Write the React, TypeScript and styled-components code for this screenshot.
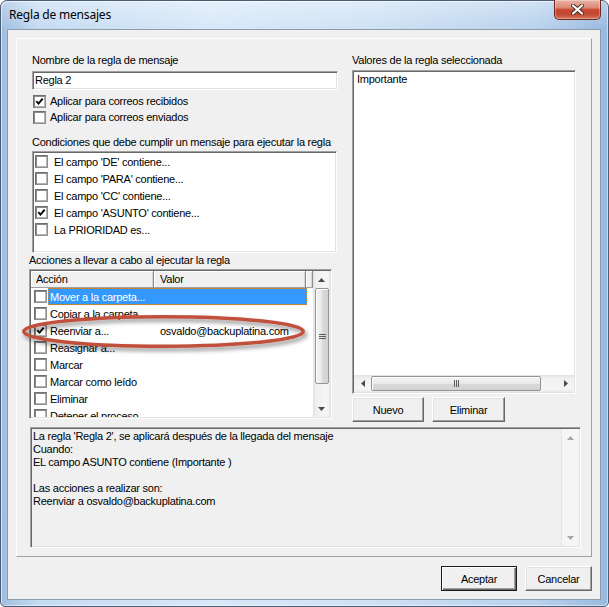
import styled, { createGlobalStyle, css } from 'styled-components';

const GlobalStyle = createGlobalStyle`
  html, body {
    margin: 0;
    padding: 0;
    background: #ffffff;
  }
  body {
    font-family: "Liberation Sans", Arial, sans-serif;
    font-size: 11px;
    letter-spacing: -0.25px;
    color: #000;
  }
`;

const sunken = css`
  box-sizing: border-box;
  border: 1px solid;
  border-color: #a0a0a0 #ffffff #ffffff #a0a0a0;
  box-shadow: inset 1px 1px 0 #696969, inset -1px -1px 0 #e3e3e3;
`;

const Window = styled.div`
  box-sizing: border-box;
  width: 609px;
  height: 607px;
  border: 1px solid #4a5d74;
  border-radius: 7px 7px 5px 5px;
  padding: 0 7px 6px 6px;
  display: flex;
  flex-direction: column;
  background:
    linear-gradient(180deg, rgba(255, 255, 255, 0.35) 0, rgba(255, 255, 255, 0) 28px),
    linear-gradient(90deg, #9fbde0 0, #c4dbf2 6%, #d8e8f8 35%, #cfe2f5 60%, #b9d2ed 88%, #98b9df 100%);
  box-shadow: inset 1px 1px 0 rgba(255, 255, 255, 0.6), inset -1px -1px 0 rgba(255, 255, 255, 0.5);
`;

const TitleBar = styled.div`
  height: 28px;
  flex-shrink: 0;
  display: flex;
  align-items: flex-start;
`;

const Title = styled.span`
  font-family: "Noto Sans", "Open Sans", sans-serif;
  font-size: 12px;
  letter-spacing: -0.2px;
  line-height: 28px;
  margin-left: 2px;
`;

const CloseButton = styled.div`
  box-sizing: border-box;
  margin-left: auto;
  margin-top: -1px;
  width: 47px;
  height: 20px;
  border: 1px solid #6e2a20;
  border-top: none;
  border-radius: 0 0 5px 5px;
  background: linear-gradient(180deg, #eab3a6 0, #dc8a77 40%, #c6452f 52%, #c24a33 75%, #d7765c 100%);
  box-shadow: inset 0 0 0 1px rgba(255, 255, 255, 0.3);
  display: flex;
  align-items: center;
  justify-content: center;
`;

const Client = styled.div`
  flex: 1;
  border: 1px solid #8d9bab;
  background: #f0f0f0;
  padding: 8px;
  display: flex;
  flex-direction: column;
`;

const Panel = styled.div`
  box-sizing: border-box;
  height: 519px;
  border: 1px solid;
  border-color: #ffffff #a0a0a0 #a0a0a0 #ffffff;
  padding: 15px 11px 0 12px;
  display: flex;
  flex-direction: column;
`;

const TopArea = styled.div`
  display: grid;
  grid-template-columns: 309px 224px;
  column-gap: 14px;
  align-items: start;
`;

const Column = styled.div`
  display: flex;
  flex-direction: column;
`;

const Label = styled.div<{ $indent?: number; $top?: number }>`
  height: 13px;
  line-height: 13px;
  white-space: nowrap;
  margin-left: ${p => p.$indent ?? 0}px;
  margin-top: ${p => p.$top ?? 0}px;
`;

const TextBox = styled.div`
  ${sunken};
  width: 306px;
  height: 19px;
  margin: 4px 0 0 3px;
  background: #ffffff;
  padding: 0 2px;
  line-height: 16px;
`;

const CheckRow = styled.div<{ $top?: number }>`
  display: flex;
  align-items: center;
  gap: 4px;
  height: 16px;
  margin: ${p => p.$top ?? 0}px 0 0 4px;
  white-space: nowrap;
`;

const Box = styled.span`
  box-sizing: border-box;
  width: 13px;
  height: 13px;
  flex-shrink: 0;
  border: 1px solid;
  border-color: #6f6f6f #8f8f8f #8f8f8f #6f6f6f;
  box-shadow: inset 1px 1px 0 #8a8a8a, inset -1px -1px 0 #b4b4b4;
  background: #ffffff;
  display: flex;
  align-items: center;
  justify-content: center;
`;

const CondBox = styled.div`
  ${sunken};
  width: 305px;
  height: 102px;
  margin: 2px 0 0 3px;
  padding: 1px 0 0 2px;
  background: #ffffff;
`;

const CondRow = styled.div`
  display: flex;
  align-items: center;
  gap: 6px;
  height: 17px;
  white-space: nowrap;
`;

const ListWrap = styled.div`
  position: relative;
  margin-top: 2px;
  width: 303px;
  height: 150px;
`;

const ListView = styled.div`
  ${sunken};
  width: 100%;
  height: 100%;
  padding: 1px;
  background: #ffffff;
  display: flex;
`;

const ListMain = styled.div`
  width: 282px;
  display: flex;
  flex-direction: column;
  overflow: hidden;
`;

const HeaderRow = styled.div`
  display: flex;
  height: 17px;
  flex-shrink: 0;
`;

const HeaderCell = styled.div<{ $w: number; $pad: number }>`
  box-sizing: border-box;
  width: ${p => p.$w}px;
  padding-left: ${p => p.$pad}px;
  background: #f0f0f0;
  border-right: 1px solid #8a8a8a;
  border-bottom: 1px solid #a0a0a0;
  box-shadow: inset 1px 1px 0 #ffffff, inset -1px 0 0 #d6d6d6;
  line-height: 16px;
  white-space: nowrap;
`;

const ActionRow = styled.div`
  display: flex;
  align-items: center;
  gap: 1px;
  height: 17px;
  padding-left: 3px;
  flex-shrink: 0;
  white-space: nowrap;
`;

const RowContent = styled.div<{ $selected?: boolean }>`
  box-sizing: border-box;
  display: flex;
  align-items: center;
  width: 259px;
  height: 17px;
  ${p =>
    p.$selected &&
    css`
      background: #3399ff;
      color: #ffffff;
      outline: 1px dotted #d08a3c;
      outline-offset: -1px;
    `}
`;

const Cell = styled.span<{ $w?: number; $pad: number }>`
  ${p => (p.$w ? `width: ${p.$w}px;` : '')}
  box-sizing: border-box;
  padding-left: ${p => p.$pad}px;
`;

const VScroll = styled.div`
  width: 17px;
  display: flex;
  flex-direction: column;
  background: linear-gradient(90deg, #e3e3e3 0, #f0f0f0 20%, #f6f6f6 80%, #e9e9e9 100%);
`;

const ArrowCell = styled.div<{ $end?: boolean }>`
  width: 17px;
  height: 17px;
  flex-shrink: 0;
  display: flex;
  align-items: center;
  justify-content: center;
  ${p => p.$end && 'margin-top: auto; margin-left: auto;'}
`;

const VThumb = styled.div`
  box-sizing: border-box;
  height: 96px;
  margin: 0 1px 0 2px;
  border: 1px solid #959595;
  border-radius: 2px;
  background: linear-gradient(90deg, #f4f4f4 0, #e8e8e8 50%, #dadada 51%, #d2d2d2 100%);
  box-shadow: inset 1px 1px 0 #ffffff;
  display: flex;
  align-items: center;
  justify-content: center;
`;

const Annotation = styled.svg`
  position: absolute;
  left: -12px;
  top: 40px;
  overflow: visible;
  pointer-events: none;
`;

const ValuesBox = styled.div`
  ${sunken};
  margin-top: 3px;
  width: 224px;
  height: 324px;
  padding: 1px;
  background: #ffffff;
  display: flex;
  flex-direction: column;
`;

const ValueText = styled.div`
  line-height: 13px;
  padding: 1px 3px;
`;

const HScroll = styled.div`
  margin-top: auto;
  height: 17px;
  display: flex;
  background: linear-gradient(180deg, #e3e3e3 0, #f0f0f0 20%, #f6f6f6 80%, #e9e9e9 100%);
`;

const HThumb = styled.div`
  box-sizing: border-box;
  width: 170px;
  margin: 1px 0 1px 0;
  border: 1px solid #959595;
  border-radius: 2px;
  background: linear-gradient(180deg, #f4f4f4 0, #e8e8e8 50%, #dadada 51%, #d2d2d2 100%);
  box-shadow: inset 1px 1px 0 #ffffff;
  display: flex;
  align-items: center;
  justify-content: center;
`;

const ButtonRow = styled.div<{ $top: number; $end?: boolean }>`
  display: flex;
  gap: 8px;
  margin-top: ${p => p.$top}px;
  ${p => p.$end && 'justify-content: flex-end;'}
`;

const Button = styled.button<{ $w: number; $default?: boolean }>`
  box-sizing: border-box;
  width: ${p => p.$w}px;
  height: 25px;
  padding: 0;
  font: inherit;
  letter-spacing: inherit;
  color: #000;
  background: #f0f0f0;
  border: 1px solid;
  border-color: #ffffff #696969 #696969 #ffffff;
  box-shadow: inset -1px -1px 0 #a0a0a0, inset 1px 1px 0 #e3e3e3;
  ${p =>
    p.$default &&
    css`
      border-color: #1a1a1a;
      box-shadow: inset 1px 1px 0 #ffffff, inset -1px -1px 0 #696969, inset -2px -2px 0 #a0a0a0;
    `}
`;

const DescBox = styled.div`
  ${sunken};
  margin: 5px 0 0 1px;
  width: 551px;
  height: 121px;
  padding: 1px;
  background: #f0f0f0;
  display: flex;
`;

const DescText = styled.div`
  flex: 1;
  padding: 1px;
  line-height: 13px;
  white-space: pre-line;
`;

const DescScroll = styled.div`
  width: 17px;
  display: flex;
  flex-direction: column;
  background: #f5f5f5;
  border-left: 1px solid #e6e6e6;
`;

type Dir = 'up' | 'down' | 'left' | 'right';

function Arrow({ dir, color = '#4a4a4a' }: { dir: Dir; color?: string }) {
  const pts: Record<Dir, string> = {
    up: '0,4 3.5,0 7,4',
    down: '0,0 3.5,4 7,0',
    left: '4,0 0,3.5 4,7',
    right: '0,0 4,3.5 0,7',
  };
  const vertical = dir === 'up' || dir === 'down';
  return (
    <svg width={vertical ? 7 : 4} height={vertical ? 4 : 7}>
      <polygon points={pts[dir]} fill={color} />
    </svg>
  );
}

function Check({ checked }: { checked?: boolean }) {
  return (
    <Box>
      {checked && (
        <svg width="9" height="9" viewBox="0 0 9 9">
          <path d="M1.3 4.2 L3.5 6.6 L7.7 1.6" fill="none" stroke="#000" strokeWidth="1.9" />
        </svg>
      )}
    </Box>
  );
}

const conditions = [
  { text: "El campo 'DE' contiene...", on: false },
  { text: "El campo 'PARA' contiene...", on: false },
  { text: "El campo 'CC' contiene...", on: false },
  { text: "El campo 'ASUNTO' contiene...", on: true },
  { text: 'La PRIORIDAD es...', on: false },
];

const actions = [
  { text: 'Mover a la carpeta...', value: '', on: false, selected: true },
  { text: 'Copiar a la carpeta...', value: '', on: false },
  { text: 'Reenviar a...', value: 'osvaldo@backuplatina.com', on: true },
  { text: 'Reasignar a...', value: '', on: false },
  { text: 'Marcar', value: '', on: false },
  { text: 'Marcar como leído', value: '', on: false },
  { text: 'Eliminar', value: '', on: false },
  { text: 'Detener el proceso', value: '', on: false },
];

const description = `La regla 'Regla 2', se aplicará después de la llegada del mensaje
Cuando:
EL campo ASUNTO contiene (Importante )

Las acciones a realizar son:
Reenviar a osvaldo@backuplatina.com`;

export default function App() {
  return (
    <>
      <GlobalStyle />
      <Window>
        <TitleBar>
          <Title>Regla de mensajes</Title>
          <CloseButton>
            <svg width="13" height="11" viewBox="0 0 13 11">
              <path d="M2 1.5 L11 9.5 M11 1.5 L2 9.5" stroke="#4a2a26" strokeWidth="4" strokeLinecap="round" />
              <path d="M2 1.5 L11 9.5 M11 1.5 L2 9.5" stroke="#ffffff" strokeWidth="2.2" strokeLinecap="round" />
            </svg>
          </CloseButton>
        </TitleBar>
        <Client>
          <Panel>
            <TopArea>
              <Column>
                <Label $indent={3}>Nombre de la regla de mensaje</Label>
                <TextBox>Regla 2</TextBox>
                <CheckRow $top={3}>
                  <Check checked />
                  Aplicar para correos recibidos
                </CheckRow>
                <CheckRow>
                  <Check />
                  Aplicar para correos enviados
                </CheckRow>
                <Label $indent={3} $top={11}>
                  Condiciones que debe cumplir un mensaje para ejecutar la regla
                </Label>
                <CondBox>
                  {conditions.map(c => (
                    <CondRow key={c.text}>
                      <Check checked={c.on} />
                      {c.text}
                    </CondRow>
                  ))}
                </CondBox>
                <Label $top={1}>Acciones a llevar a cabo al ejecutar la regla</Label>
                <ListWrap>
                  <ListView>
                    <ListMain>
                      <HeaderRow>
                        <HeaderCell $w={123} $pad={5}>Acción</HeaderCell>
                        <HeaderCell $w={152} $pad={6}>Valor</HeaderCell>
                        <HeaderCell $w={7} $pad={0} />
                      </HeaderRow>
                      {actions.map(a => (
                        <ActionRow key={a.text}>
                          <Check checked={a.on} />
                          <RowContent $selected={a.selected}>
                            <Cell $w={106} $pad={2}>{a.text}</Cell>
                            <Cell $pad={6}>{a.value}</Cell>
                          </RowContent>
                        </ActionRow>
                      ))}
                    </ListMain>
                    <VScroll>
                      <ArrowCell>
                        <Arrow dir="up" />
                      </ArrowCell>
                      <VThumb>
                        <svg width="7" height="7">
                          <path d="M0 1.5h7M0 3.5h7M0 5.5h7" stroke="#5a5a5a" strokeWidth="1" />
                        </svg>
                      </VThumb>
                      <ArrowCell $end>
                        <Arrow dir="down" />
                      </ArrowCell>
                    </VScroll>
                  </ListView>
                  <Annotation width="300" height="50">
                    <defs>
                      <filter id="shadow" x="-10%" y="-50%" width="120%" height="200%">
                        <feDropShadow dx="2" dy="3" stdDeviation="2" floodColor="#000" floodOpacity="0.45" />
                      </filter>
                    </defs>
                    <ellipse
                      cx="146.5"
                      cy="22.5"
                      rx="139.75"
                      ry="14.75"
                      fill="none"
                      stroke="#c0503a"
                      strokeWidth="3.5"
                      filter="url(#shadow)"
                    />
                  </Annotation>
                </ListWrap>
              </Column>
              <Column>
                <Label>Valores de la regla seleccionada</Label>
                <ValuesBox>
                  <ValueText>Importante</ValueText>
                  <HScroll>
                    <ArrowCell>
                      <Arrow dir="left" />
                    </ArrowCell>
                    <HThumb>
                      <svg width="7" height="7">
                        <path d="M1.5 0v7M3.5 0v7M5.5 0v7" stroke="#5a5a5a" strokeWidth="1" />
                      </svg>
                    </HThumb>
                    <ArrowCell $end>
                      <Arrow dir="right" />
                    </ArrowCell>
                  </HScroll>
                </ValuesBox>
                <ButtonRow $top={3}>
                  <Button $w={72}>Nuevo</Button>
                  <Button $w={73}>Eliminar</Button>
                </ButtonRow>
              </Column>
            </TopArea>
            <DescBox>
              <DescText>{description}</DescText>
              <DescScroll>
                <ArrowCell>
                  <Arrow dir="up" color="#a8a8a8" />
                </ArrowCell>
                <ArrowCell $end>
                  <Arrow dir="down" color="#a8a8a8" />
                </ArrowCell>
              </DescScroll>
            </DescBox>
          </Panel>
          <ButtonRow $top={9} $end>
            <Button $w={76} $default>
              Aceptar
            </Button>
            <Button $w={67}>Cancelar</Button>
          </ButtonRow>
        </Client>
      </Window>
    </>
  );
}
